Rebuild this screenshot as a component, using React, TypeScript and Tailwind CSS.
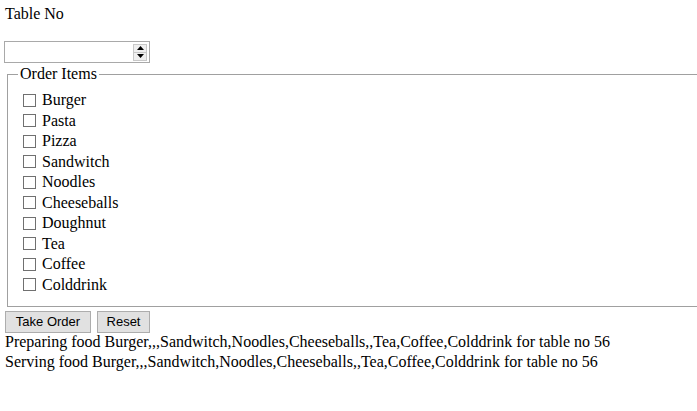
import React from "react";

const items = ["Burger","Pasta","Pizza","Sandwitch","Noodles","Cheeseballs","Doughnut","Tea","Coffee","Colddrink"];

export default function App() {
  return (
    <div className="min-h-[411px] bg-white text-black pl-[4px] overflow-hidden" style={{ fontFamily: '"Liberation Serif", serif' }}>
      <div className="pt-[5px] text-[16px] leading-[18px] pl-[1px]">Table No</div>
      <div className="mt-[18px] w-[146px] h-[22px] border border-[#a9a9a9] bg-white flex items-center justify-end pr-[2px]">
        <div className="w-[14px] h-[17px] flex flex-col border border-[#c8c8c8] bg-[#efefef]">
          <div className="flex-1 flex items-center justify-center border-b border-[#c8c8c8]">
            <svg width="7" height="4" viewBox="0 0 7 4"><path d="M3.5 0 L7 4 L0 4 Z" fill="#000" /></svg>
          </div>
          <div className="flex-1 flex items-center justify-center">
            <svg width="7" height="4" viewBox="0 0 7 4"><path d="M0 0 L7 0 L3.5 4 Z" fill="#000" /></svg>
          </div>
        </div>
      </div>
      <fieldset className="mt-[2px] ml-[3px] mr-[-6px] border border-[#a0a0a0] pb-[11px]">
        <legend className="ml-[10px] px-[2px] text-[16px] leading-[18px]">Order Items</legend>
        <div className="pt-[7px] pl-[15px] flex flex-col">
          {items.map((it) => (
            <div key={it} className="h-[20.5px] flex items-center gap-[6px] text-[16px] leading-[18px]">
              <span className="w-[13px] h-[13px] border border-[#707070] bg-white shrink-0" />
              <span>{it}</span>
            </div>
          ))}
        </div>
      </fieldset>
      <div className="mt-[4px] ml-[1px] flex gap-[6px]" style={{ fontFamily: '"Liberation Sans", sans-serif' }}>
        <div className="w-[86px] h-[22px] border border-[#adadad] bg-[#e1e1e1] text-[13px] flex items-center justify-center">Take Order</div>
        <div className="w-[53px] h-[22px] border border-[#adadad] bg-[#e1e1e1] text-[13px] flex items-center justify-center">Reset</div>
      </div>
      <div className="pl-[1px] text-[16px] leading-[20px] mt-[-1px]">
        <div>Preparing food Burger,,,Sandwitch,Noodles,Cheeseballs,,Tea,Coffee,Colddrink for table no 56</div>
        <div>Serving food Burger,,,Sandwitch,Noodles,Cheeseballs,,Tea,Coffee,Colddrink for table no 56</div>
      </div>
    </div>
  );
}
